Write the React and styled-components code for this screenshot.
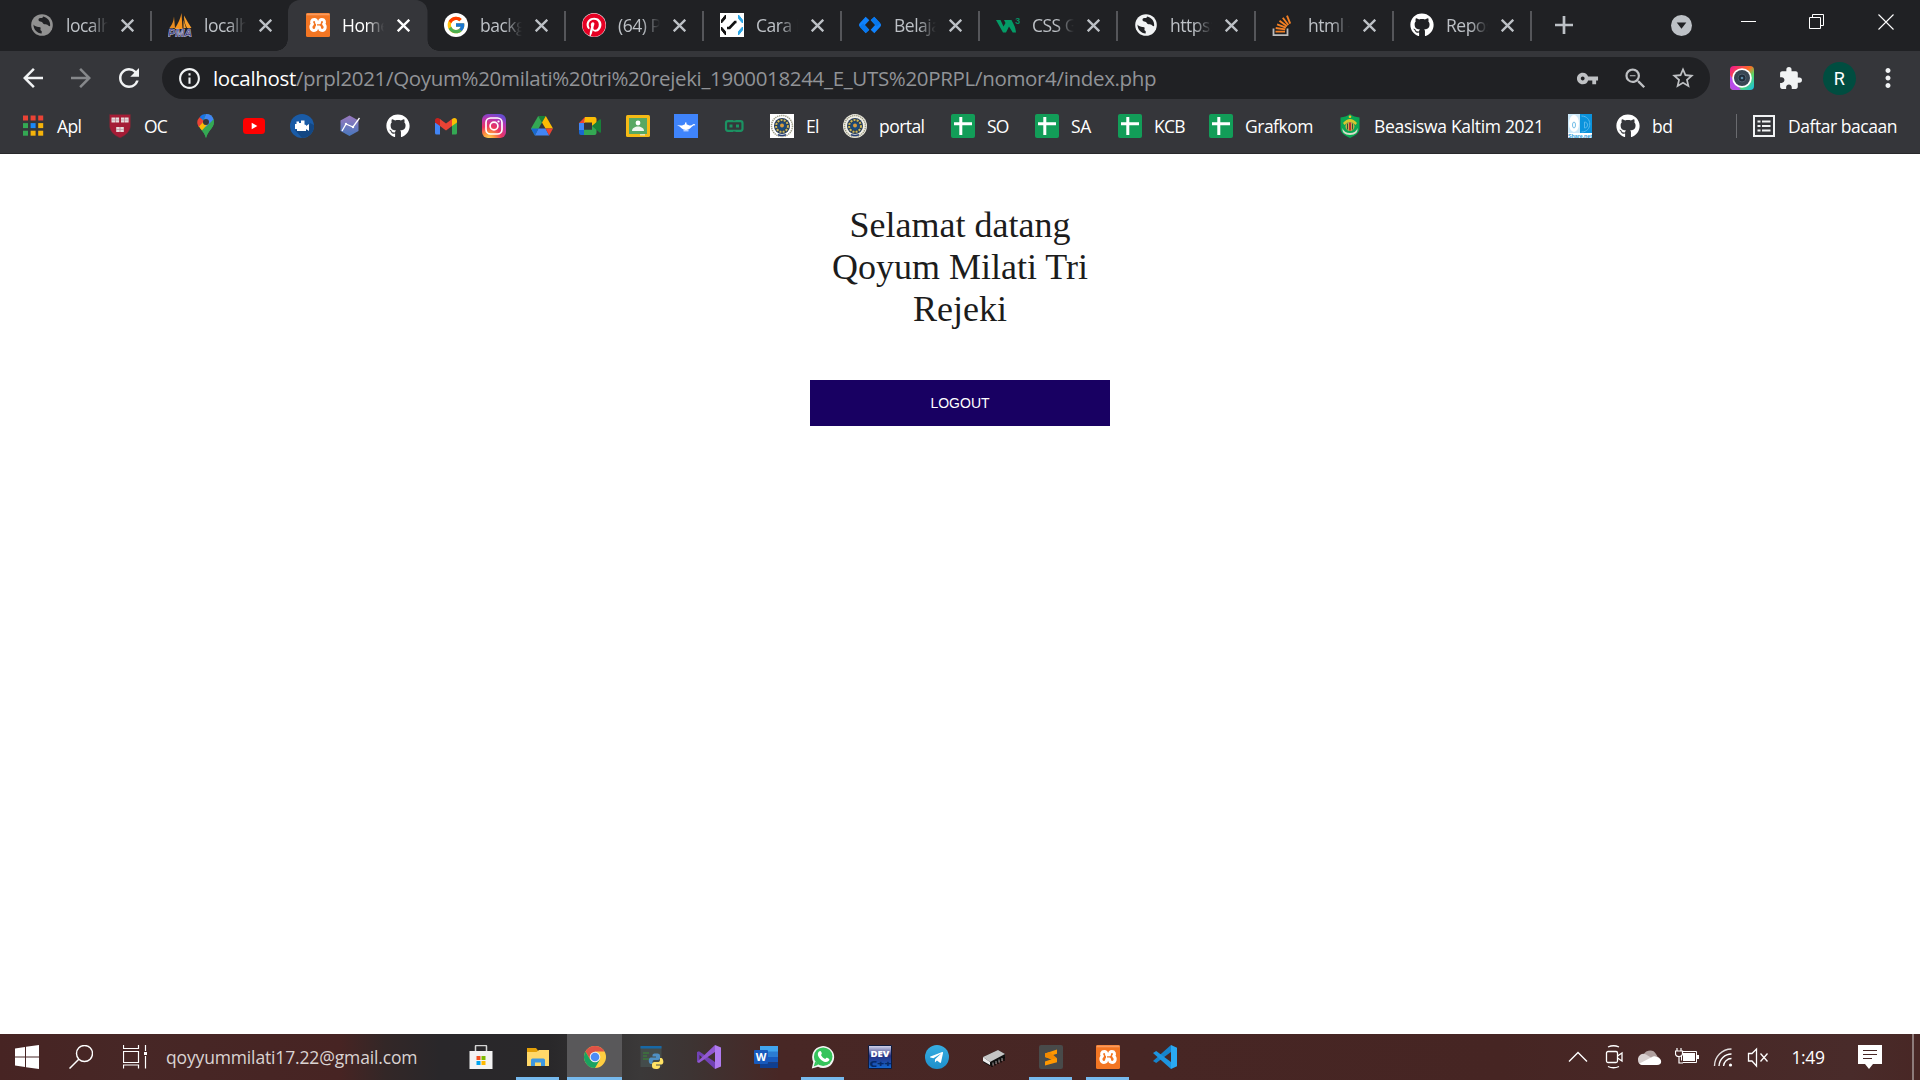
import React from "react";
import styled, { createGlobalStyle } from "styled-components";
import { FcGoogle } from "react-icons/fc";
import { FaGithub, FaPinterest, FaTelegramPlane } from "react-icons/fa";
import { SiXampp } from "react-icons/si";
import {
  MdArrowBack, MdArrowForward, MdRefresh, MdInfoOutline, MdVpnKey, MdZoomOut,
  MdStarBorder, MdExtension, MdMoreVert,
} from "react-icons/md";

const Global = createGlobalStyle`
  * { box-sizing: border-box; }
  html, body { margin: 0; background: #fff; overflow: hidden; }
  svg { display: block; flex: none; }
`;

const ui = `"Open Sans", "Noto Sans", sans-serif`;

const Screen = styled.div`
  width: 1920px;
  height: 1080px;
  display: flex;
  flex-direction: column;
  background: #fff;
  font-family: ${ui};
`;

/* ---------- tab strip ---------- */
const TabStrip = styled.header`
  height: 51px;
  display: flex;
  background: #202124;
  padding-left: 12px;
`;
const Tab = styled.div`
  width: 138px;
  height: 51px;
  display: flex;
  align-items: center;
  padding: 0 0 1px 18px;
  position: relative;
  color: ${(p) => (p.$active ? "#fff" : "#bdc1c6")};
  background: ${(p) => (p.$active ? "#35363a" : "transparent")};
  border-radius: 12px 12px 0 0;
  ${(p) =>
    p.$active &&
    `
    box-shadow: 1.5px 0 0 #35363a;
    &::before, &::after {
      content: "";
      position: absolute;
      bottom: 0;
      width: 12px;
      height: 12px;
    }
    &::before { left: -12px; background: radial-gradient(circle at 0 0, transparent 11.5px, #35363a 12px); }
    &::after { right: -13px; background: radial-gradient(circle at 100% 0, transparent 11.5px, #35363a 12px); }
  `}
`;
const TabSeparator = styled.i`
  position: absolute;
  right: -1.5px;
  top: 11px;
  width: 1.5px;
  height: 30px;
  background: #55565a;
`;
const TabTitle = styled.span`
  width: 42px;
  margin: -1px 0 0 12px;
  overflow: hidden;
  white-space: pre;
  font-size: 17.500px;
  line-height: 24px;
  letter-spacing: -0.5px;
  mask-image: linear-gradient(90deg, #000 58%, transparent 100%);
`;
const TabClose = styled.svg`
  margin-left: 13px;
  stroke: ${(p) => (p.$active ? "#fff" : "#bdc1c6")};
`;
const NewTab = styled.div`
  width: 68px;
  height: 50px;
  display: flex;
  align-items: center;
  justify-content: center;
`;
const WindowButtons = styled.div`
  margin-left: auto;
  display: flex;
`;
const TabSearch = styled.div`
  width: 44px;
  height: 50px;
  display: flex;
  align-items: center;
`;
const WindowButton = styled.div`
  width: 68.5px;
  height: 43px;
  display: flex;
  align-items: center;
  justify-content: center;
`;

/* ---------- toolbar ---------- */
const Toolbar = styled.div`
  height: 54px;
  display: flex;
  align-items: center;
  background: #35363a;
  padding-left: 9px;
`;
const NavButton = styled.div`
  width: 48px;
  display: flex;
  justify-content: center;
  color: ${(p) => (p.$dim ? "#86888b" : "#f1f3f4")};
`;
const Omnibox = styled.div`
  width: 1548px;
  height: 42px;
  margin: 0 8px 0 9px;
  padding: 0 14px 0 15px;
  border-radius: 21px;
  background: #202124;
  display: flex;
  align-items: center;
  color: #f1f3f4;
`;
const Url = styled.span`
  flex: 1;
  margin-left: 11px;
  font-size: 20.500px;
  line-height: 28px;
  letter-spacing: -0.33px;
  color: #919397;
  white-space: nowrap;
  b { font-weight: 400; color: #fff; }
`;
const OmniAction = styled.div`
  width: 48px;
  display: flex;
  justify-content: center;
  color: #bfc1c4;
  &:last-child { width: 26px; margin-left: 11px; }
`;
const ToolbarAction = styled.div`
  width: 48.5px;
  display: flex;
  justify-content: center;
  color: #f1f3f4;
`;
const Avatar = styled.div`
  width: 33px;
  height: 33px;
  border-radius: 50%;
  background: #004d40;
  color: #fff;
  font: 18px/33px Roboto, sans-serif;
  text-align: center;
`;

/* ---------- bookmarks ---------- */
const BookmarkBar = styled.nav`
  height: 49px;
  padding: 0 0 6px 21px;
  display: flex;
  align-items: center;
  background: #35363a;
  border-bottom: 1px solid #28292b;
`;
const Bookmark = styled.div`
  width: ${(p) => p.$w}px;
  flex: none;
  display: flex;
  align-items: center;
`;
const BookmarkLabel = styled.span`
  margin-left: ${(p) => p.$gap ?? 12}px;
  color: #fff;
  font-size: 17.500px;
  line-height: 24px;
  white-space: nowrap;
  letter-spacing: ${(p) => p.$ls ?? 0}px;
`;
const ReadingList = styled.div`
  margin-left: auto;
  margin-right: 21px;
  height: 24px;
  width: 163px;
  border-left: 1px solid #6a6b6f;
  padding-left: 15px;
  display: flex;
  align-items: center;
`;

/* ---------- page ---------- */
const Page = styled.main`
  flex: 1;
  display: flex;
  flex-direction: column;
  align-items: center;
  padding-top: 50px;
  background: #fff;
`;
const Welcome = styled.h1`
  width: 300px;
  margin: 0 0 50px;
  font: 400 36px/42px "Liberation Serif", serif;
  color: #1c1c1c;
  text-align: center;
`;
const Logout = styled.button`
  width: 300px;
  height: 46px;
  border: 0;
  padding: 0;
  background: #180062;
  color: #fff;
  font: 14px/46px "Liberation Sans", sans-serif;
`;

/* ---------- taskbar ---------- */
const Taskbar = styled.footer`
  height: 46px;
  display: flex;
  align-items: stretch;
  background: linear-gradient(90deg, #472423 0, #472726 130px, #472423 340px, #332727 385px, #29272a 440px, #29282a 550px, #3b3939 640px, #3d3433 690px, #482725 780px, #462523 1500px, #492b2a 1850px, #482725 1920px);
`;
const SystemButton = styled.div`
  width: 54px;
  display: flex;
  align-items: center;
  justify-content: center;
`;
const Account = styled.div`
  width: 291px;
  padding-left: 4px;
  font-size: 17.500px;
  line-height: 46px;
  letter-spacing: -0.15px;
  color: #dad3d2;
  white-space: nowrap;
`;
const AppButton = styled.div`
  width: 55px;
  margin-right: 2px;
  display: flex;
  align-items: center;
  justify-content: center;
  position: relative;
  background: ${(p) => (p.$focused ? "#59585a" : "transparent")};
  &::after {
    content: "";
    display: ${(p) => (p.$running ? "block" : "none")};
    position: absolute;
    bottom: 0;
    left: ${(p) => (p.$focused ? 0 : 6)}px;
    right: ${(p) => (p.$focused ? 0 : 6)}px;
    height: 3px;
    background: #76b9ed;
  }
`;
const Tray = styled.div`
  margin-left: auto;
  display: flex;
  align-items: center;
`;
const TrayItem = styled.div`
  width: ${(p) => p.$w}px;
  display: flex;
  justify-content: center;
`;
const Clock = styled.div`
  width: 68px;
  padding-right: 2px;
  text-align: center;
  color: #fff;
  font-size: 17.500px;
  line-height: 46px;
  letter-spacing: -0.4px;
`;
const ShowDesktop = styled.div`
  width: 8px;
  height: 46px;
  border-left: 2px solid #8d7b7a;
`;

const S = ({ s = 24, children, ...rest }) => (
  <svg width={s} height={s} viewBox="0 0 24 24" fill="none" {...rest}>{children}</svg>
);

const IconTile = styled.div`
  width: 24px;
  height: 24px;
  display: flex;
  align-items: center;
  justify-content: center;
  flex: none;
  border-radius: ${(p) => p.$r ?? 0};
  background: ${(p) => p.$bg ?? "transparent"};
`;

const Globe = ({ c }) => (
  <S>
    <circle cx="12" cy="12" r="10.8" fill={c} />
    <path d="M3.5 11.6C5 13.6 7 14 9 13.9c1.700 0 1.900.9 1.500 2-.3.9.2 1.700 1.200 2v2.600C7 20.400 3.400 16.500 3.500 11.600zM13 3.400c-.2 1.500-1.300 1.600-2.600 1.700-1.600.1-2.100 1-1.800 2.200.3 1 1.300 1.300 2.500 1.400 1.500.2 1.600 1.600 2.700 2.300 1.100.6 2.600.2 3.600.8.9.5 1 1.500 2.700 1.300.7-4.900-2.600-8.900-7.100-9.700z" fill="#202124" />
  </S>
);
const Pma = () => (
  <S>
    <path d="M6 3.500 7 15H1.500Q5.500 10 6 3.500z" fill="#e98b20" />
    <path d="M13.500 0 14.500 16H6.500Q12 8 13.500 0z" fill="#f7941d" />
    <path d="M16 2.500Q16 10 19 15h4.500Q19.500 9 16 2.500zM15.500 7v8H18z" fill="#f8a02c" />
    <text x="0" y="24" fontFamily="Liberation Sans, sans-serif" fontSize="10" fontWeight="700" fontStyle="italic" fill="#292a78" stroke="#d0d0e0" strokeWidth=".5" textLength="24" lengthAdjust="spacingAndGlyphs">PMA</text>
  </S>
);
/* Four rounded lobes around a centre, with a narrow orange seam inside the white band. */
const XamppGlyph = () => (
  <S>
    <rect width="24" height="24" rx="1.500" fill="#f37623" />
    <rect x=".5" y=".5" width="23" height="1.800" fill="#fa9a5c" />
    <path d="M8.200 6.600c-2.400 0-3.600 2.600-1.700 4.400C3.600 13.400 5 17.400 8 17.400c2.200 0 2.800-1.500 2.800-3.400h2.600c0 1.900.6 3.400 2.800 3.400 3 0 4.200-4 1.400-6.400 1.900-1.800.7-4.400-1.700-4.400-1.800 0-2.500 1.200-2.500 3.200h-2.600c0-2-.8-3.200-2.600-3.200z" stroke="#fff" strokeWidth="3" strokeLinejoin="round" />
    <path d="M9.200 9.800h1.300v4.400" stroke="#fff" strokeWidth="1" />
  </S>
);
const CaraIcon = () => (
  <S>
    <path fill="#fff" d="M0 0h24v24H0z" />
    <path d="M5.500 2 1.500 7v3l4-4.500zM5.500 22l-4-5v-3l4 4.500z" fill="#111" stroke="#111" />
    <path d="m18.500 2 4 5v3l-4-4.500zM18.500 22l4-5v-3l-4 4.500z" fill="#2aa7e8" stroke="#2aa7e8" />
    <path d="M7 15h2.500L15 9h1.500" stroke="#111" strokeWidth="2.700" />
  </S>
);
const BelajarIcon = () => (
  <S>
    <path d="m9.500 5.500-6 6.500 6 6.500M14.500 5.500l6 6.500-6 6.500" stroke="#1083fe" strokeWidth="5" strokeLinejoin="round" />
    <path d="m3.500 12 6 6.500M20.500 12l-6-6.500" stroke="#0878ee" strokeWidth="4.500" />
  </S>
);
const W3Icon = () => (
  <S>
    <path d="M0 7h4.500l3 6.500 2-3.500L8 7h7.500c1.500 3.500 4 6 4.500 12.500h-3.300l-3.700-6-3 6h-3z" fill="#049b66" />
    <text x="19.200" y="10.500" fontFamily="Liberation Sans, sans-serif" fontSize="9" fontWeight="700" fill="#048d61">3</text>
  </S>
);
const StackIcon = () => (
  <S>
    <path d="M1.500 15.500v6.600h14v-6.600" stroke="#bcbbbb" strokeWidth="1.800" />
    <path d="M4 18.600h9.500M4.200 15l9.500 1.400M5.600 11.400l8.800 3.200M8 7.800l7.500 5.400M11.300 4.700l5.500 7.300M15.500 2.700l3.200 8" transform="translate(-.5 0)" stroke="#f48024" strokeWidth="1.900" />
  </S>
);

const TABS = [
  { title: "localhost", icon: <Globe c="#919191" /> },
  { title: "localhost", icon: <Pma /> },
  { title: "Home", icon: <XamppGlyph />, active: true },
  { title: "background", icon: <IconTile $bg="#fff" $r="50%"><FcGoogle size={20} /></IconTile> },
  { title: "(64) Pinterest", icon: <IconTile $bg="#fff" $r="50%"><FaPinterest size={24} color="#e60023" /></IconTile> },
  { title: "Cara Membuat", icon: <CaraIcon /> },
  { title: "Belajar", icon: <BelajarIcon /> },
  { title: "CSS Gradient", icon: <W3Icon /> },
  { title: "https://", icon: <Globe c="#f1f3f4" /> },
  { title: "html - Stack", icon: <StackIcon /> },
  { title: "Repositories", icon: <FaGithub size={24} color="#fff" /> },
];

const AppsGrid = () => (
  <S>
    {["#ea4335", "#ea4335", "#ea4335", "#34a853", "#1a87f8", "#f5b30a", "#34a853", "#f5b30a", "#f5b30a"].map((c, i) => (
      <rect key={i} x={2 + (i % 3) * 7.600} y={1.500 + Math.floor(i / 3) * 7.600} width="5" height="5" fill={c} />
    ))}
  </S>
);
const Shield = () => (
  <S>
    <path d="M1.500.5h21V11c0 6-4 10-10.500 13C5.500 21 1.500 17 1.500 11z" fill="#a51c36" stroke="#5e3038" strokeWidth=".6" />
    {[[3.500, 3.500], [13, 3.500], [8.200, 13]].map(([x, y]) => (
      <g key={x}><path d={`M${x} ${y}h3.600v5H${x}zM${x + 4} ${y}h3.600v5H${x + 4}z`} fill="#e7dcdc" /><path d={`M${x} ${y + 2.500}h7.600`} stroke="#b894a0" strokeWidth=".7" /></g>
    ))}
  </S>
);
const Maps = () => (
  <S>
    <path d="M12 24c-1-4-3-6-5.500-9.500C4.800 12 4 10.400 4 8l8-8c4.500 0 8 3.500 8 8 0 6.500-6.500 9-8 16z" fill="#34a853" />
    <path d="M4 8a8 8 0 0 0 2.500 6.500L17.800 2.600 12 8z" fill="#fbbc04" />
    <path d="M12 0a8 8 0 0 1 7.600 5.400L12 14 9 8z" fill="#4285f4" />
    <path d="M5.600 3.200Q8 0 12 0l-3 6.500z" fill="#1a73e8" />
    <path d="M5.600 3.200 10 7l-5.300 6A8 8 0 0 1 5.600 3.200z" fill="#ea4335" />
    <path d="m9.500 11-3.500 3 2 2.500 7-8z" fill="#fbbc04" />
    <path d="M14 11 19.600 5.400C21.500 13 15 14 12 24c-1-3.500-2.500-5.500-4-7.500z" fill="#34a853" />
    <circle cx="12" cy="8" r="3" fill="#35363a" />
  </S>
);
const Youtube = () => (<S><rect x="1" y="4" width="22" height="16" rx="3.500" fill="#f00" /><path d="m9.700 8.800 5.600 3.200-5.600 3.200z" fill="#fff" /></S>);
const Movie = () => (
  <S>
    <circle cx="12" cy="12" r="12" fill="#1a5ba6" />
    <path d="m5 16 7 7.900A12 12 0 0 0 24 11l-4-2-2 7z" fill="#134783" />
    <path d="M5 10h1.500V7.500h2.500V9h2V6.500h3.500v4l1.500.5v1l3-2v7l-3-2v2H7V15H5z" fill="#fff" />
  </S>
);
const Hexagon = () => (
  <S>
    <defs><linearGradient id="hex" x2="0" y2="1"><stop stopColor="#9a79be" /><stop offset="1" stopColor="#4777bd" /></linearGradient></defs>
    <path d="m11.500 1.500 9 5v10.500l-9 5-9-5V6.500z" fill="url(#hex)" />
    <path d="m4 17 4-7 7 3 6.500-9" stroke="#fff" strokeWidth="1.300" />
    <circle cx="8" cy="10" r="1.200" fill="#fff" /><circle cx="15" cy="13" r="1.200" fill="#fff" />
  </S>
);
const Gmail = () => (
  <S>
    <path d="M1 8.500V19a1.500 1.500 0 0 0 1.500 1.500H6V9z" fill="#4285f4" />
    <path d="M18 9v11.500h3.500A1.500 1.500 0 0 0 23 19V8.500z" fill="#34a853" />
    <path d="m6 5 6 4.500L18 5v7l-6 4.500L6 12z" fill="#ea4335" />
    <path d="M1 6.500C1 4 3.700 3.200 6 5v7L1 8.500z" fill="#c5221f" />
    <path d="M23 6.500C23 4 20.300 3.200 18 5v7l5-3.500z" fill="#fbbc04" />
  </S>
);
const Instagram = () => (
  <S>
    <defs>
      <radialGradient id="ig" cx=".28" cy="1.050" r="1.100"><stop stopColor="#ffd958" /><stop offset=".25" stopColor="#fb923c" /><stop offset=".5" stopColor="#ea3362" /><stop offset=".8" stopColor="#b636b1" /><stop offset="1" stopColor="#6a4cd0" /></radialGradient>
    </defs>
    <rect width="24" height="24" rx="6" fill="url(#ig)" />
    <g stroke="#fff" strokeWidth="1.700"><rect x="4" y="4" width="16" height="16" rx="4.500" /><circle cx="12" cy="12" r="3.900" /></g>
    <circle cx="16.500" cy="7.500" r="1.100" fill="#fff" />
  </S>
);
const Drive = () => (
  <S>
    <path d="M8.200 2h7.600L12 8.500z" fill="#188038" />
    <path d="M8.200 2 1 14.500l3.800 6.700L12 8.500z" fill="#34a853" />
    <path d="M15.800 2 23 14.500h-7.500L12 8.500z" fill="#fbbc04" />
    <path d="M8.500 14.500h7l3.700 6.900H4.800z" fill="#4285f4" />
    <path d="M15.500 14.500H23l-3.800 6.900z" fill="#ea4335" /><path d="m1 14.500h7.500l-3.700 6.900z" fill="#1967d2" />
  </S>
);
const Meet = () => (
  <S>
    <path d="M7 3 1 9h6z" fill="#ea4335" /><path d="M1 9h5v7H1z" fill="#4285f4" />
    <path d="M1 16h5v5H3a2 2 0 0 1-2-2z" fill="#1967d2" />
    <path d="M7 3h9.500a2 2 0 0 1 2 2v7L14 12V8.500H6L7 3z" fill="#fbbc04" />
    <path d="M6 15.800h8V12l4.500-3v10a2 2 0 0 1-2 2H6z" fill="#34a853" />
    <path d="m14 12 7.500-6.500c.8-.6 1.500-.3 1.500.5v12c0 .8-.8 1-1.500.5z" fill="#188038" />
  </S>
);
const Classroom = () => (
  <S>
    <rect y="1" width="24" height="22" rx="1.500" fill="#f5ba15" /><path d="M3 4h18v16H3z" fill="#57a863" />
    <circle cx="12" cy="9" r="2.400" fill="#fff" /><path d="M6 17c0-3 3-4.500 6-4.500s6 1.500 6 4.500z" fill="#eef6ef" />
    <path d="M14 20h5v1.500h-5z" fill="#e8e0b4" />
  </S>
);
const Lamp = () => (
  <S>
    <path d="M0 0h24v24H0z" fill="#3f84fb" />
    <path d="M3 11.300q3 0 5 .3l3-1.300V8.500h1.500v1.800l3 1.300q2.500.2 3.500-1.300 1.500-.9 2.300.6-.9.700-1.600.4-2 1.400-3.700 3.300-1.500 1.400-4 1.400-3 0-4.500-1.800-1.500-2-4.500-2.900z" fill="#fff" />
    <path d="M9.500 16.800h5" stroke="#fff" strokeWidth=".9" />
  </S>
);
const GreenLink = () => (
  <S>
    <rect x="4" y="7.200" width="16.500" height="9.600" rx="2" stroke="#1b9262" strokeWidth="2.200" />
    <path d="M7.500 12h3M14 12h3" stroke="#1b9262" strokeWidth="3" /><path d="M11 6.200h2.500M11 17.800h2.500" stroke="#35363a" strokeWidth=".6" />
  </S>
);
const Seal = ({ square }) => (
  <S>
    {square ? <path d="M0 0h24v24H0z" fill="#fff" /> : <circle cx="12" cy="12" r="12" fill="#f2f0e6" />}
    <circle cx="12" cy="12" r="10.500" stroke="#9a9a84" strokeWidth="1.500" strokeDasharray="1.300 .8" />
    <circle cx="12" cy="12" r="8" fill="#263c5a" />
    <circle cx="12" cy="12" r="5.900" stroke="#cfb752" strokeWidth="2" strokeDasharray="2 1.200" />
    <circle cx="12" cy="12" r="4.300" fill="#1c4a78" /><circle cx="12" cy="11.500" r="2" fill="#d89c3e" />
    <path d="M8 20.800q4 1.500 8 0" stroke="#243d75" strokeWidth="1.500" />
  </S>
);
const Sheet = () => (
  <S><rect width="24" height="24" rx="2" fill="#129d58" /><path d="M9.800 3v18M3 9.800h18" stroke="#fff" strokeWidth="3" /></S>
);
const Kaltim = () => (
  <S>
    <path d="M12 0c3 2.500 6 3 9.500 3.500V14c0 5-4 7.500-9.500 10-5.500-2.500-9.500-5-9.500-10V3.500C6 3 9 2.500 12 0z" fill="#0aa653" />
    <path d="M5 9q7-8 14 0l-1.500 2Q12 5 6.500 11z" fill="#d6c62e" /><circle cx="12" cy="2.800" r="1.300" fill="#f0c52c" />
    <circle cx="12" cy="12.500" r="4.500" fill="#c4a94f" /><path d="M12 8.500v8" stroke="#c22d2d" strokeWidth="2" /><path d="M9.500 9.500v6M14.500 9.500v6" stroke="#245f35" />
    <path d="M4.500 14q1.500 5 7.500 5t7.500-5q1 7-7.500 7T4.500 14z" fill="#d9dccb" />
  </S>
);
const ShareNet = () => (
  <S>
    <path d="M0 0h24v24H0z" fill="#fff" /><path d="M12 0h12v19H12z" fill="#0b93dc" />
    <path d="M0 0h12v19H0z" fill="#cbe8f8" />
    <ellipse cx="6" cy="9.500" rx="5" ry="8.500" fill="#fff" /><ellipse cx="6" cy="11" rx="1.500" ry="3" stroke="#75bfe8" />
    <path d="M13.500 2c11 0 11 16 0 16M16.500 8v6c4 0 4-6 0-6z" stroke="#59b8ec" />
    <text x="0" y="23.500" fontFamily="Liberation Sans, sans-serif" fontSize="6" fontWeight="700" fill="#2a9bd9" textLength="24" lengthAdjust="spacingAndGlyphs">Share.net</text>
  </S>
);

const BOOKMARKS = [
  [87, <AppsGrid />, "Apl", -0.6], [86, <Shield />, "OC", -0.9],
  [48, <Maps />], [48, <Youtube />], [48, <Movie />], [48, <Hexagon />],
  [48, <FaGithub size={24} color="#fff" />], [48, <Gmail />], [48, <Instagram />], [48, <Drive />],
  [48, <Meet />], [48, <Classroom />], [48, <Lamp />], [48, <GreenLink />],
  [73, <Seal square />, "El", -0.8], [108, <Seal />, "portal", -0.55],
  [84, <Sheet />, "SO", -0.8], [83, <Sheet />, "SA", -0.3], [91, <Sheet />, "KCB", -0.7],
  [129, <Sheet />, "Grafkom", -0.5], [230, <Kaltim />, "Beasiswa Kaltim 2021", -0.32],
  [48, <ShareNet />], [80, <FaGithub size={24} color="#fff" />, "bd", -0.5],
];

const Store = () => (
  <S>
    <path d="M6.500 6V1.500a1 1 0 0 1 1-1h9a1 1 0 0 1 1 1V6" stroke="#d3d3d3" strokeWidth="1.500" />
    <path d="M.5 6h23v18H.5z" fill="#f3f3f3" />
    <path d="M7.500 11h4v4h-4z" fill="#f25022" /><path d="M12.500 11h4v4h-4z" fill="#7fba00" /><path d="M7.500 16h4v4h-4z" fill="#00a4ef" /><path d="M12.500 16h4v4h-4z" fill="#ffb900" />
  </S>
);
const Explorer = () => (
  <S>
    <path d="M1 3h9l2 2.500V9H1z" fill="#e3a008" /><path d="M1 7h9.500L13 5h10v16H1z" fill="#ffd869" />
    <path d="M5 21v-6a1.500 1.500 0 0 1 1.500-1.500h11A1.500 1.500 0 0 1 19 15v6h-4v-3.500H9V21z" fill="#3f98e0" />
  </S>
);
const Chrome = () => (
  <S>
    <circle cx="12" cy="12" r="11" fill="#ffcd40" />
    <path d="M2.470 6.500A11 11 0 0 1 21.530 6.500H12L7.200 14.800z" fill="#de5246" />
    <path d="M2.470 6.500A11 11 0 0 0 12 23l4.800-8.200H7.200z" fill="#1aa260" />
    <circle cx="12" cy="12" r="5.300" fill="#f1f1f1" /><circle cx="12" cy="12" r="4.300" fill="#4c8bf5" />
  </S>
);
const Python = () => (
  <S>
    <path d="M.5 1.500h21V22H.5z" fill="#444c4b" /><path d="M.5 1h21v2.500H.5z" fill="#1768a6" />
    <path d="M3 8h6M3 11h4M3 14h6" stroke="#3d753c" strokeWidth="1.300" />
    <path d="M15.500 8.500c-3 0-3 1-3 3H16v1h-5c-3 0-3 6.500 0 6.500h1.500v-2c0-1.500 1-2 2-2H18c1.500 0 2-1 2-2v-2c0-2-1-2.500-4.500-2.500z" fill="#4f90c4" />
    <path d="M16 24c3.500 0 4-1 4-3v-.5h-4v-1h5.500c3 0 2-6.500-.3-6.500H20v2c0 1.500-1 2-2 2h-3.500c-1.500 0-2.500 1-2.500 2.500V21c0 2 1 3 4 3z" fill="#ffe163" />
  </S>
);
const VisualStudio = () => (
  <S>
    <path d="m18 0 6 2.500v19L18 24z" fill="#b07bf0" />
    <path d="m0 7 2-.8L18 17v7L2.500 10v6L0 17z" fill="#7142b5" /><path d="M18 0v7L2 18l-2-1z" fill="#9259d2" />
  </S>
);
const Word = () => (
  <S>
    <path d="M6 1h18v6H6z" fill="#41a5ee" /><path d="M6 6.500h18v6H6z" fill="#2b7cd3" /><path d="M6 12h18v5.500H6z" fill="#185abd" /><path d="M6 17.500h18V23H6z" fill="#103f91" />
    <rect y="5" width="14" height="14" rx="1" fill="#185abd" /><text x="1.800" y="16" fontFamily="Open Sans, sans-serif" fontWeight="700" fontSize="11" fill="#fff">W</text>
  </S>
);
const Whatsapp = () => (
  <S>
    <path d="M.8 23.500 2.300 17A11 11 0 1 1 7 21.800z" fill="#f4f4f4" /><circle cx="12.200" cy="11.700" r="9.300" fill="#35c45b" /><path d="m2.700 21.500 1.500-5 3 3.300z" fill="#35c45b" />
    <path d="M8 6.500c1-1 1.700-.8 2.300.6.700 1.500.7 1.700-.3 2.900 1 2 2.300 3.200 4.200 4 1.300-1.500 1.300-1.500 2.800-.8 1.600.8 1.700.9 1 2.400-1 1.500-3 2-5.500.8-2.700-1.200-5-4-5.500-6-.4-1.600 0-2.900 1-3.900z" fill="#fff" />
  </S>
);
const DevCpp = () => (
  <S>
    <defs><linearGradient id="dev" x2="0" y2="1"><stop stopColor="#d8d9ef" /><stop offset=".45" stopColor="#27307f" /><stop offset="1" stopColor="#1469d2" /></linearGradient></defs>
    <path d="M.5.5h23v23H.5z" fill="url(#dev)" stroke="#101b3e" />
    <text x="2.500" y="11.800" fontFamily="Open Sans, sans-serif" fontWeight="800" fontSize="9.500" fill="#fff" textLength="19" lengthAdjust="spacingAndGlyphs">DEV</text>
    <text x="1.500" y="22" fontFamily="Open Sans, sans-serif" fontWeight="800" fontSize="9.500" fill="#052a68" textLength="22" lengthAdjust="spacingAndGlyphs">C++</text>
  </S>
);
const Telegram = () => (
  <IconTile $bg="linear-gradient(#37aee2, #1e8fcb)" $r="50%"><FaTelegramPlane size={15} color="#fff" /></IconTile>
);
const Chip = () => (
  <S>
    <path d="m1 12 15-7 7 4v4L8 21l-7-4z" fill="#111" /><path d="m1 12 15-7 7 4-15 8z" fill="#c5c5c5" /><path d="m1 12 7 5v3l-7-4z" fill="#eee" />
    <path d="M10 18v4M13 16.500v4M16 15v4M19 13.500v4M22 12v4" stroke="#090909" strokeWidth="1.400" /><path d="M11 17.500v3M14 16v3M17 14.500v3M20 13v3" stroke="#ddd" strokeWidth=".7" />
  </S>
);
const Sublime = () => (
  <S>
    <rect width="24" height="24" rx="2" fill="#484a4a" />
    <path d="M6 8.500 18 4.500v4.200l-7 2.300 7 2.200v4L6 20.500v-4l6.500-2.200L6 12z" fill="#ff9800" /><path d="m6 8.500 5-1.600 7 6.300-5.500 1.100L6 12z" fill="#f38a00" />
  </S>
);
const VSCode = () => (
  <S>
    <path d="m18 0 6 2.700v18.600L18 24z" fill="#2aa9f2" /><path d="M18 0v7L3.200 18 0 16z" fill="#1683cb" /><path d="M18 24v-7L3.200 6 0 8z" fill="#1e94df" />
  </S>
);

const APPS = [
  [<Store />], [<Explorer />, true], [<Chrome />, true, true], [<Python />], [<VisualStudio />], [<Word />],
  [<Whatsapp />, true], [<DevCpp />], [<Telegram />], [<Chip />], [<Sublime />, true], [<XamppGlyph />, true], [<VSCode />],
];

export default function App() {
  return (
    <Screen>
      <Global />
      <TabStrip>
        {TABS.map((t, i) => (
          <Tab key={i} $active={t.active}>
            {t.icon}
            <TabTitle>{t.title}</TabTitle>
            <TabClose $active={t.active} width="13" height="13" viewBox="0 0 13 13">
              <path d="m.7.7 11.600 11.600M12.300.7.7 12.300" strokeWidth="2.300" />
            </TabClose>
            {i !== 1 && i !== 2 && <TabSeparator />}
          </Tab>
        ))}
        <NewTab><svg width="18" height="18"><path d="M9 0v18M0 9h18" stroke="#bdc1c6" strokeWidth="2.700" /></svg></NewTab>
        <WindowButtons>
          <TabSearch><svg width="21" height="21"><circle cx="10.500" cy="10.500" r="10.500" fill="#bdc1c6" /><path d="M5.700 7.500h9.600l-4.800 6.300z" fill="#202124" /></svg></TabSearch>
          <WindowButton><svg width="16" height="16"><path d="M0 7.500h15" stroke="#fff" /></svg></WindowButton>
          <WindowButton><svg width="16" height="16"><path d="M.5 3.500h11v11H.5zM3.500 3.500v-3h11v11h-3" fill="none" stroke="#fff" /></svg></WindowButton>
          <WindowButton><svg width="16" height="16"><path d="m.5.5 15 15M15.500.5l-15 15" stroke="#fff" strokeWidth="1.100" /></svg></WindowButton>
        </WindowButtons>
      </TabStrip>

      <Toolbar>
        <NavButton><MdArrowBack size={30} /></NavButton>
        <NavButton $dim><MdArrowForward size={30} /></NavButton>
        <NavButton><MdRefresh size={30} /></NavButton>
        <Omnibox>
          <MdInfoOutline size={25} />
          <Url><b>localhost</b>/prpl2021/Qoyum%20milati%20tri%20rejeki_1900018244_E_UTS%20PRPL/nomor4/index.php</Url>
          <OmniAction><MdVpnKey size={23} /></OmniAction>
          <OmniAction><MdZoomOut size={27} /></OmniAction>
          <OmniAction><MdStarBorder size={26} /></OmniAction>
        </Omnibox>
        <ToolbarAction>
          <S>
            <defs><linearGradient id="cam" x2="1" y2="1"><stop stopColor="#ee1195" /><stop offset=".45" stopColor="#ff6e22" /><stop offset=".65" stopColor="#58d867" /><stop offset="1" stopColor="#16bce9" /></linearGradient></defs>
            <rect width="24" height="24" rx="4" fill="url(#cam)" /><path d="M0 9v11a4 4 0 0 0 4 4h7z" fill="#b84be8" />
            <circle cx="12" cy="12" r="9.800" fill="#fff" /><circle cx="12" cy="12" r="8" fill="#384653" /><circle cx="12" cy="12" r="4" fill="#202d3a" stroke="#4d5d6b" /><circle cx="12" cy="12" r="1.300" fill="#5c8ba8" />
          </S>
        </ToolbarAction>
        <ToolbarAction><MdExtension size={25} /></ToolbarAction>
        <ToolbarAction><Avatar>R</Avatar></ToolbarAction>
        <ToolbarAction><MdMoreVert size={30} /></ToolbarAction>
      </Toolbar>

      <BookmarkBar>
        {BOOKMARKS.map(([w, icon, label, ls], i) => (
          <Bookmark key={i} $w={w}>{icon}{label && <BookmarkLabel $ls={ls}>{label}</BookmarkLabel>}</Bookmark>
        ))}
        <ReadingList>
          <S><rect x="2" y="2" width="20" height="20" stroke="#f1f3f4" strokeWidth="2" /><path d="M5.500 7.500h3M5.500 12h3M5.500 16.500h3M10 7.500h8.500M10 12h8.500M10 16.500h8.500" stroke="#f1f3f4" strokeWidth="2" /></S>
          <BookmarkLabel $ls={-0.45}>Daftar bacaan</BookmarkLabel>
        </ReadingList>
      </BookmarkBar>

      <Page>
        <Welcome>Selamat datang Qoyum Milati Tri Rejeki</Welcome>
        <Logout>LOGOUT</Logout>
      </Page>

      <Taskbar>
        <SystemButton><S><path d="m0 3.400 10-1.400v9.500H0zM11 1.800 24 0v11.500H11zM0 12.500h10V22L0 20.600zM11 12.500h13V24l-13-1.800z" fill="#fff" /></S></SystemButton>
        <SystemButton><S><circle cx="15.500" cy="8.500" r="8" stroke="#fff" strokeWidth="1.400" /><path d="M9.800 14.200.5 23.500" stroke="#fff" strokeWidth="1.500" /></S></SystemButton>
        <SystemButton><S stroke="#fff"><path d="M.5 0v3.500h15V0M.5 6.500h15v11H.5zM.5 23.500V20h15v3.500M22.500 0v6M22.500 11v12.500" strokeWidth="1.200" /><path d="M21 7h3v3h-3z" fill="#fff" stroke="none" /></S></SystemButton>
        <Account>qoyyummilati17.22@gmail.com</Account>
        {APPS.map(([icon, running, focused], i) => (
          <AppButton key={i} $running={running} $focused={focused}>{icon}</AppButton>
        ))}
        <Tray>
          <TrayItem $w={36}><svg width="20" height="12"><path d="m1 10.500 9-9 9 9" fill="none" stroke="#fff" strokeWidth="1.400" /></svg></TrayItem>
          <TrayItem $w={36}><S stroke="#fff" strokeWidth="1.300"><rect x="4.500" y="6.500" width="11" height="11" rx="1.500" /><path d="m15.500 11 4.500-3v8l-4.500-3M6 2q5.500-2.500 11 0M6 21.500q5.500 2.500 11 0" /></S></TrayItem>
          <TrayItem $w={36}><S><path d="M5 12a7 7 0 0 1 13-3l3 5-15 5z" fill="#b0a09f" /><path d="M0 15a5.500 5.500 0 0 1 8-5.500l9 5.500-12 5q-5 0-5-5z" fill="#d8d0d0" /><path d="M1.500 18.500 15 11.500a6 6 0 0 1 4 .5c4.500.5 6.500 8 0 8H5q-2 0-3.500-1.500z" fill="#fff" /></S></TrayItem>
          <TrayItem $w={37}><S><path d="M6.500 6.500h15v11h-15z" stroke="#fff" /><path d="M8 8h12v8H8z" fill="#fff" /><path d="M22 10h2v4h-2z" fill="#fff" /><path d="M2 3v3M6 3v3M.5 6h7v2.500q0 3-3.500 3t-3.500-3zM4 11.500V18h4" fill="#472625" stroke="#fff" strokeWidth="1.200" /></S></TrayItem>
          <TrayItem $w={36}><S stroke="#fff" strokeWidth="1.400"><path d="M3.500 21A17 17 0 0 1 20.500 4" opacity=".85" /><path d="M8 21A12.500 12.500 0 0 1 20.500 9M12.500 21a8 8 0 0 1 8-7.500" /><circle cx="19.500" cy="20" r="1.600" fill="#fff" stroke="none" /></S></TrayItem>
          <TrayItem $w={34}><S stroke="#fff" strokeWidth="1.300"><path d="M2.500 8.500H6L10.500 4v17L6 16H2.500zM14.500 8.500l7 8M21.500 8.500l-7 8" /></S></TrayItem>
          <Clock>1:49</Clock>
          <TrayItem $w={54}><S><path d="M0 0h24v19H15l-4 5-4-5H0z" fill="#fff" /><path d="M5 5.500h14M5 9.500h14M5 13.500h9" stroke="#472625" strokeWidth="1.200" /></S></TrayItem>
          <TrayItem $w={15} />
          <ShowDesktop />
        </Tray>
      </Taskbar>
    </Screen>
  );
}
